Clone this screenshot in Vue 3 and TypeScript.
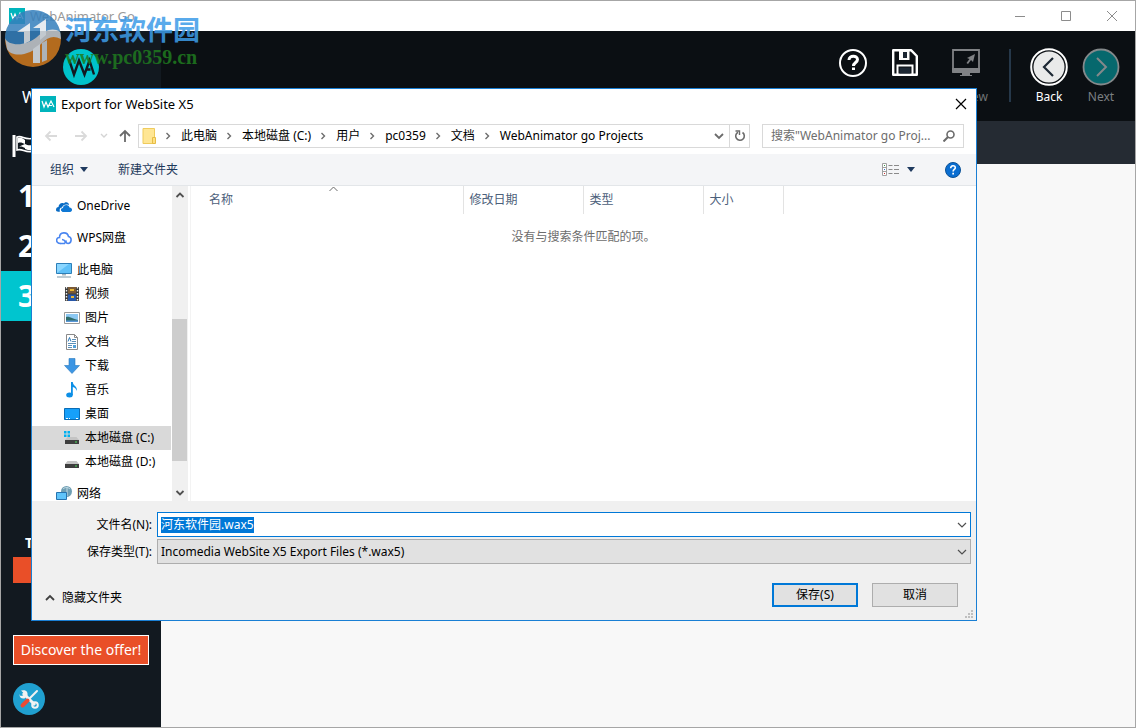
<script setup lang="ts">
import { onMounted, ref } from 'vue'

interface TreeItem {
  id: string
  label: string
  level: number
  gap?: boolean
  selected?: boolean
}

const tree: TreeItem[] = [
  { id: 'onedrive', label: 'OneDrive', level: 0 },
  { id: 'wps', label: 'WPS网盘', level: 0, gap: true },
  { id: 'pc', label: '此电脑', level: 0, gap: true },
  { id: 'video', label: '视频', level: 1 },
  { id: 'picture', label: '图片', level: 1 },
  { id: 'document', label: '文档', level: 1 },
  { id: 'download', label: '下载', level: 1 },
  { id: 'music', label: '音乐', level: 1 },
  { id: 'desktop', label: '桌面', level: 1 },
  { id: 'diskc', label: '本地磁盘 (C:)', level: 1, selected: true },
  { id: 'diskd', label: '本地磁盘 (D:)', level: 1 },
  { id: 'network', label: '网络', level: 0, gap: true },
]

const crumbs: string[] = ['此电脑', '本地磁盘 (C:)', '用户', 'pc0359', '文档', 'WebAnimator go Projects']
const steps: string[] = ['1', '2', '3']

const fileName = ref<string>('河东软件园.wax5')
const fileInput = ref<HTMLInputElement | null>(null)

onMounted(() => {
  fileInput.value?.focus()
  fileInput.value?.select()
})
</script>

<template>
  <div class="window">
    <header class="titlebar">
      <svg class="app-icon" viewBox="0 0 16 16" aria-hidden="true">
        <rect width="16" height="16" fill="#00b4bc" />
        <path d="M2 5l2 6 2-5 2 5 3-6 3 6M9 9.500h3" fill="none" stroke="#fff" stroke-width="1.200" />
      </svg>
      <span class="window-name">WebAnimator Go</span>
      <div class="window-controls">
        <button type="button" aria-label="Minimize">
          <svg viewBox="0 0 12 12"><path d="M1 6.500h10" /></svg>
        </button>
        <button type="button" aria-label="Maximize">
          <svg viewBox="0 0 12 12"><path d="M1.500 1.500h9v9h-9z" /></svg>
        </button>
        <button type="button" aria-label="Close window">
          <svg viewBox="0 0 12 12"><path d="M1 1l10 10M11 1L1 11" /></svg>
        </button>
      </div>
    </header>

    <div class="workspace">
      <aside class="sidebar">
        <svg class="brand" viewBox="0 0 36 36" aria-hidden="true">
          <circle cx="18" cy="18" r="18" fill="#00c3cb" />
          <path d="M6 10.500l5 15 5-14 5.500 14 5-14 4.500 14M22.500 20.500h5" fill="none" stroke="#121920" stroke-width="2.400" />
        </svg>
        <p class="brand-name">W</p>
        <nav class="steps">
          <button type="button" class="step" aria-label="Start">
            <svg class="flag" viewBox="0 0 24 24">
              <path d="M2 1v22" stroke="#fff" stroke-width="3" />
              <path d="M5 3c6-2 7 4 18 1v13c-10 3-12-3-18-1z" fill="none" stroke="#fff" stroke-width="1.600" />
              <path d="M6 4c4-1 5 1 7 2v4c-3-1-4-2-7-1zM13 10c3 2 6 1 9 1v5c-4 1-6 0-9-1zM6 13c3-1 5 0 7 1v-4" fill="#fff" />
            </svg>
          </button>
          <button v-for="s in steps" :key="s" type="button" class="step" :class="{ active: s === '3' }">{{ s }}</button>
        </nav>
        <div class="offer">
          <p class="trial">T</p>
          <div class="trial-bar"></div>
          <a class="discover" href="#">Discover the offer!</a>
          <button type="button" class="tools" aria-label="Tools">
            <svg viewBox="0 0 32 32">
              <circle cx="16" cy="16" r="16" fill="#20a0d0" />
              <path d="M10 10l12 12" stroke="#f2f2f2" stroke-width="3" />
              <path d="M8 7.500l3 3-1 2-2.500.5-1-2c0 4 2 5 5 4.500l3-3c.5-3-1-6-5.500-5z" fill="#f2f2f2" />
              <circle cx="22" cy="22" r="2.800" fill="none" stroke="#f2f2f2" stroke-width="2" />
              <path d="M24 8l-8 8" stroke="#f2f2f2" stroke-width="2" stroke-linecap="round" />
              <path d="M14.500 17.500l-5 5" stroke="#e94b35" stroke-width="4" stroke-linecap="round" />
            </svg>
          </button>
        </div>
      </aside>

      <main class="main">
        <div class="header">
          <button type="button" class="tool" aria-label="Help">
            <span class="tool-icon">
              <svg width="30" height="30" viewBox="0 0 30 30">
                <circle cx="15" cy="15" r="13" fill="none" stroke="#fff" stroke-width="2" />
                <path d="M11 12c0-5 8.500-5 8.500-.5 0 3-4 3-4 6.500" fill="none" stroke="#fff" stroke-width="3" />
                <path d="M14 19.500h3v2.500h-3z" fill="#fff" />
              </svg>
            </span>
          </button>
          <button type="button" class="tool" aria-label="Save">
            <span class="tool-icon">
              <svg width="28" height="30" viewBox="0 0 28 30">
                <path d="M2.200 2.200h17.800l5.800 5.800v18.800h-23.600z" fill="none" stroke="#fff" stroke-width="2.400" stroke-linejoin="round" />
                <path d="M8 2h10.500v10H8z" fill="#fff" />
                <path d="M12 4h4v6h-4z" fill="#1c2733" />
                <path d="M6.500 27v-9.500h15v9.500" fill="none" stroke="#fff" stroke-width="2" />
                <path d="M8.500 19.500h11v6h-11z" fill="#1c2733" />
              </svg>
            </span>
          </button>
          <button type="button" class="tool preview">
            <span class="tool-icon">
              <svg width="30" height="30" viewBox="0 0 30 30">
                <path d="M2 2h26v22h-26z" fill="none" stroke="#808285" stroke-width="1.800" />
                <path d="M1 20h28v4h-28zM11 24h8v3h2v1h-12v-1h2z" fill="#808285" />
                <path d="M24 6l-8 4 2.500 1-3 4 1.500 1 3-4 2 2z" fill="#808285" />
              </svg>
            </span>
            <span>Preview</span>
          </button>
          <span class="divider"></span>
          <button type="button" class="tool back">
            <span class="tool-icon">
              <svg width="38" height="38" viewBox="0 0 38 38">
                <circle cx="19" cy="19" r="17.800" fill="#0b0f13" stroke="#fff" stroke-width="2" />
                <circle cx="19" cy="19" r="15.500" fill="#e9eaea" />
                <path d="M23 10l-9 9 9 9" fill="none" stroke="#1d2834" stroke-width="2.200" />
              </svg>
            </span>
            <span>Back</span>
          </button>
          <button type="button" class="tool next">
            <span class="tool-icon">
              <svg width="38" height="38" viewBox="0 0 38 38">
                <circle cx="19" cy="19" r="17.500" fill="#06686d" stroke="#84898b" stroke-width="1.800" />
                <path d="M15 10l9 9-9 9" fill="none" stroke="#84898b" stroke-width="2" />
              </svg>
            </span>
            <span>Next</span>
          </button>
        </div>
        <div class="subbar"></div>
      </main>
    </div>

    <section class="dialog" role="dialog" aria-labelledby="dialog-title">
      <div class="dialog-title">
        <svg class="app-icon" viewBox="0 0 16 16" aria-hidden="true">
          <rect width="16" height="16" fill="#00b4bc" />
          <path d="M2 5l2 6 2-5 2 5 3-6 3 6M9 9.500h3" fill="none" stroke="#fff" stroke-width="1.200" />
        </svg>
        <h1 id="dialog-title">Export for WebSite X5</h1>
        <button type="button" class="dialog-close" aria-label="Close">
          <svg viewBox="0 0 12 12"><path d="M1 1l10 10M11 1L1 11" fill="none" stroke="#000" stroke-width="1.200" /></svg>
        </button>
      </div>

      <div class="navrow">
        <button type="button" class="nav-button" aria-label="Previous location">
          <svg width="14" height="12" viewBox="0 0 14 12"><path d="M13 6H2M6.500 1.500L2 6l4.500 4.500" stroke="#dadada" stroke-width="1.800" fill="none" /></svg>
        </button>
        <button type="button" class="nav-button" aria-label="Next location">
          <svg width="14" height="12" viewBox="0 0 14 12"><path d="M1 6h11M7.500 1.500L12 6l-4.500 4.500" stroke="#dadada" stroke-width="1.800" fill="none" /></svg>
        </button>
        <button type="button" class="nav-button small" aria-label="Recent locations">
          <svg width="8" height="6" viewBox="0 0 8 6"><path d="M1 1l3 3 3-3" stroke="#d4d4d4" stroke-width="1.400" fill="none" /></svg>
        </button>
        <button type="button" class="nav-button up" aria-label="Up">
          <svg width="14" height="14" viewBox="0 0 14 14"><path d="M7 13V2M2 7l5-5 5 5" stroke="#6b6b6b" stroke-width="1.800" fill="none" /></svg>
        </button>
        <div class="address">
          <svg class="folder" viewBox="0 0 14 16" aria-hidden="true">
            <path d="M1 .5h11.500v15H1z" fill="#ffe694" stroke="#efcb5c" />
            <path d="M10.500 9.500h3v6h-3z" fill="#ffe082" stroke="#e6bd45" />
          </svg>
          <ol class="crumbs">
            <li v-for="c in crumbs" :key="c">
              <svg width="6" height="8" viewBox="0 0 6 8" aria-hidden="true"><path d="M1.500 1l3 3-3 3" stroke="#6d6d6d" stroke-width="1.400" fill="none" /></svg>
              <a href="#">{{ c }}</a>
            </li>
          </ol>
          <button type="button" class="history" aria-label="History">
            <svg width="10" height="8" viewBox="0 0 10 8"><path d="M1 2l4 4 4-4" stroke="#6b6b6b" stroke-width="1.800" fill="none" /></svg>
          </button>
          <button type="button" class="refresh" aria-label="Refresh">
            <svg width="12" height="12" viewBox="0 0 12 12">
              <path d="M4 2.200a4.300 4.300 0 1 0 4.500.3" fill="none" stroke="#6b6b6b" stroke-width="1.600" />
              <path d="M1.500 1h4v4" fill="none" stroke="#6b6b6b" stroke-width="1.400" />
            </svg>
          </button>
        </div>
        <div class="search">
          <input type="text" aria-label="搜索" placeholder="搜索&quot;WebAnimator go Proj..." />
          <svg width="12" height="12" viewBox="0 0 12 12" aria-hidden="true">
            <circle cx="7.500" cy="4.500" r="3.500" fill="none" stroke="#6b6b6b" stroke-width="1.600" />
            <path d="M5 7l-4.500 4.500" stroke="#6b6b6b" stroke-width="2" />
          </svg>
        </div>
      </div>

      <div class="commands">
        <button type="button" class="command organize">
          组织
          <svg width="8" height="5" viewBox="0 0 8 5" aria-hidden="true"><path d="M0 0h8L4 5z" fill="#1f3a5f" /></svg>
        </button>
        <button type="button" class="command">新建文件夹</button>
        <button type="button" class="command view" aria-label="View">
          <svg width="17" height="13" viewBox="0 0 17 13">
            <path d="M.5.500h4v12h-4zM.5 4.500h4M.5 8.500h4" fill="#fff" stroke="#a0a0a0" />
            <path d="M6.500 2.500h4M12 2.500h5M6.500 6.500h4M12 6.500h5M6.500 10.500h4M12 10.500h5" stroke="#8a8a8a" />
            <path d="M2 2h1v1h-1z" fill="#3a9a4a" /><path d="M2 6h1v1h-1z" fill="#2a72d4" /><path d="M2 10h1v1h-1z" fill="#d03030" />
          </svg>
          <svg width="8" height="5" viewBox="0 0 8 5"><path d="M0 0h8L4 5z" fill="#1f3a5f" /></svg>
        </button>
        <button type="button" class="command help" aria-label="Dialog help">
          <svg width="16" height="16" viewBox="0 0 16 16">
            <circle cx="8" cy="8" r="7.500" fill="#0a6ed1" stroke="#0b5196" />
            <path d="M5.700 6.200c0-3.200 4.600-3.200 4.600-.4 0 1.700-2.200 1.700-2.200 3.700" fill="none" stroke="#fff" stroke-width="1.600" />
            <path d="M7.300 10.800h1.700v1.700h-1.700z" fill="#fff" />
          </svg>
        </button>
      </div>

      <div class="browser">
        <ul class="tree">
          <li v-for="t in tree" :key="t.id" :class="{ gap: t.gap, child: t.level === 1, selected: t.selected }">
            <svg class="tree-icon" viewBox="0 0 16 16" aria-hidden="true">
              <template v-if="t.id === 'onedrive'">
                <path d="M0 12c0-2 1-3 2.500-3 0-3 3-5 5.500-3.500 1-2 5-1.500 5 1.500-4-1-6 0-7 2.500-2 0-3 2-2 4-2.500.5-4 0-4-1.500z" fill="#0a6cc4" />
                <path d="M6 13.500c-2-1-1-3.500 1-3.500 0-3.500 5.500-4 6.500-.5 3 0 3.500 4 .5 4.500H6.500z" fill="#0f78d4" />
              </template>
              <template v-else-if="t.id === 'wps'">
                <path d="M4.500 13.500C-1 13.500 0 7 3.500 7.500c0-6 8-6 9-1 4 1 3 7-.5 7-3 0-2-4-6-4" fill="none" stroke="#4a86f0" stroke-width="1.600" />
                <path d="M4 13.500h4.500l2-3" fill="none" stroke="#4a86f0" stroke-width="1.400" />
              </template>
              <template v-else-if="t.id === 'pc'">
                <path d="M.5 1.500h15v10H.5z" fill="#5fc0f8" stroke="#2d7fb8" />
                <path d="M1 11L13 2H1z" fill="#8ad6ff" />
                <path d="M6 12h4v1.500H6z" fill="#a9b6be" />
                <path d="M1 15h14" stroke="#7d98a8" />
              </template>
              <template v-else-if="t.id === 'video'">
                <path d="M1 1h14v14H1z" fill="#3a3a3a" />
                <path d="M4 1h8v6.500H4z" fill="#7a5a36" /><path d="M4 8.500h8V15H4z" fill="#2757a8" />
                <path d="M6 3h4v2H6zM7 10h3v2H7z" fill="#e8b634" />
                <path d="M2.500 1v14M13.500 1v14" stroke="#eee" stroke-width="1.400" stroke-dasharray="1.500 1.500" />
              </template>
              <template v-else-if="t.id === 'picture'">
                <path d="M.5 2.500h15v11H.5z" fill="#fff" stroke="#9a9a9a" />
                <path d="M2 4h12v8H2z" fill="#8cc8f2" />
                <path d="M2 7c4-1 6 2 12 3v1H2z" fill="#2f6d6b" /><path d="M2 10.500h12V12H2z" fill="#5a98d8" />
              </template>
              <template v-else-if="t.id === 'document'">
                <path d="M2.500.5h8l3 3v12h-11z" fill="#fff" stroke="#8a8a8a" />
                <path d="M10.500.5v3h3" fill="none" stroke="#8a8a8a" />
                <path d="M8 5.500h4M8 7.500h4M4 9.500h8M4 11.500h4M4 13.500h4" stroke="#5b8fb8" />
                <path d="M4 7.500l1.500-4 1.500 4" fill="none" stroke="#2b78b8" /><path d="M9 11h3v3H9z" fill="#52a0d8" />
              </template>
              <path v-else-if="t.id === 'download'" d="M5 .5h6v7h4.500L8 15.500.5 7.500H5z" fill="#3d96e4" stroke="#2878be" stroke-width=".6" />
              <template v-else-if="t.id === 'music'">
                <ellipse cx="5.500" cy="13" rx="3.300" ry="2.500" fill="#0c8fe6" />
                <path d="M7 0h1.800c0 4 5.500 4.500 3.700 9-.3-2.500-1.700-3.500-3.700-4v8H7z" fill="#0c8fe6" />
              </template>
              <template v-else-if="t.id === 'desktop'">
                <path d="M.5 2.500h15v11H.5z" fill="#16a0fa" stroke="#0a6cb5" />
                <path d="M2 12.500h2M5 12.500h1M12 12.500h2" stroke="#fff" />
              </template>
              <template v-else-if="t.id === 'diskc' || t.id === 'diskd'">
                <path v-if="t.id === 'diskc'" d="M0 1h2.500v2.500H0zM3.500 1H6v2.500H3.500zM0 4.500h2.500V7H0zM3.500 4.500H6V7H3.500z" fill="#00b0f0" />
                <path d="M3.500 7h9l2.500 3H1z" fill="#c4c4c4" />
                <path d="M1 10h14v4H1z" fill="#3e3e3e" /><path d="M11 11.500h2v1h-2z" fill="#4be05a" />
              </template>
              <template v-else>
                <circle cx="10.500" cy="5.500" r="5.500" fill="#6f9fb4" />
                <path d="M7 3c2-2 5-2 7 0M11 1v9" stroke="#c5dce6" fill="none" />
                <path d="M.5 6.500h10v7H.5z" fill="#5fc4fa" stroke="#2674b0" />
                <path d="M3 15.500h6" stroke="#7d98a8" />
              </template>
            </svg>
            <span>{{ t.label }}</span>
          </li>
        </ul>
        <div class="scrollbar" aria-hidden="true">
          <svg width="10" height="8" viewBox="0 0 10 8"><path d="M1.500 6L5 2.500 8.500 6" stroke="#505050" stroke-width="1.800" fill="none" /></svg>
          <div class="thumb"></div>
          <svg width="10" height="8" viewBox="0 0 10 8"><path d="M1.500 2L5 5.500 8.500 2" stroke="#505050" stroke-width="1.800" fill="none" /></svg>
        </div>
        <div class="files">
          <table>
            <colgroup>
              <col class="col-name" /><col class="col-mid" /><col class="col-mid" /><col class="col-size" /><col />
            </colgroup>
            <thead>
              <tr>
                <th scope="col" class="name">
                  名称
                  <svg class="sort" width="9" height="6" viewBox="0 0 9 6" aria-hidden="true"><path d="M.5 5l4-4 4 4" stroke="#6b6b6b" fill="none" /></svg>
                </th>
                <th scope="col">修改日期</th>
                <th scope="col">类型</th>
                <th scope="col">大小</th>
                <td></td>
              </tr>
            </thead>
            <tbody>
              <tr><td colspan="5" class="empty">没有与搜索条件匹配的项。</td></tr>
            </tbody>
          </table>
        </div>
      </div>

      <form class="footer" @submit.prevent>
        <div class="field">
          <label for="file-name">文件名(N):</label>
          <div class="combo">
            <input id="file-name" ref="fileInput" v-model="fileName" type="text" spellcheck="false" />
            <button type="button" aria-label="File names">
              <svg width="10" height="8" viewBox="0 0 10 8"><path d="M1 2l4 4 4-4" stroke="#505050" stroke-width="1.200" fill="none" /></svg>
            </button>
          </div>
        </div>
        <div class="field">
          <label for="file-type">保存类型(T):</label>
          <div class="picker">
            <select id="file-type">
              <option>Incomedia WebSite X5 Export Files (*.wax5)</option>
            </select>
            <svg width="10" height="8" viewBox="0 0 10 8" aria-hidden="true"><path d="M1 2l4 4 4-4" stroke="#505050" stroke-width="1.200" fill="none" /></svg>
          </div>
        </div>
        <div class="actions">
          <button type="button" class="toggle">
            <svg width="10" height="8" viewBox="0 0 10 8" aria-hidden="true"><path d="M1 6l4-4 4 4" stroke="#404040" stroke-width="1.800" fill="none" /></svg>
            隐藏文件夹
          </button>
          <button type="submit" class="push primary">保存(S)</button>
          <button type="button" class="push">取消</button>
        </div>
        <svg class="grip" width="8" height="8" viewBox="0 0 8 8" aria-hidden="true">
          <path d="M6 0h2v2H6zM3 3h2v2H3zM6 3h2v2H6zM0 6h2v2H0zM3 6h2v2H3zM6 6h2v2H6z" fill="#bfbfbf" />
        </svg>
      </form>
    </section>

    <div class="watermark">
      <svg width="58" height="58" viewBox="0 0 58 58" aria-hidden="true">
        <circle cx="28" cy="29" r="28" fill="#d07a1e" />
        <path d="M0 29a28 28 0 0 1 56-2C48 22 43 24 36 31 26 41 8 42 0 29z" fill="#3580bd" />
        <path d="M0 28c3 8 20 9 32-1 8-7 16-10 23-5l1 7c-8-4-13-2-20 5C25 46 7 48 2 39z" fill="#c9cdd2" />
        <path d="M25 13v18l-6 3V22h-7z" fill="#e1e8ee" />
        <path d="M41 9v16l-6 5V18h-7zM28 39l7-5v19h-7z" fill="#e1e8ee" />
        <path d="M37 33l5-3v20l-5 2z" fill="#c9cdd2" />
      </svg>
      <div class="watermark-text">
        <span class="watermark-name">河东软件园</span>
        <span class="watermark-url">www.pc0359.cn</span>
      </div>
    </div>
  </div>
</template>

<style>
html,
body,
#app {
  height: 100%;
}
</style>

<style scoped>
* {
  box-sizing: border-box;
}

.window {
  position: relative;
  display: flex;
  flex-direction: column;
  min-height: 100vh;
  border: 1px solid #a6a6a6;
  background: #f8f8f8;
  color: #000;
  font: 12px/16px "Noto Sans", "Noto Sans CJK SC", sans-serif;
  overflow: hidden;
}

button,
input,
select {
  margin: 0;
  padding: 0;
  border: 0;
  background: none;
  color: inherit;
  font: inherit;
}

p,
h1,
ul,
ol {
  margin: 0;
  padding: 0;
  list-style: none;
}

a {
  color: inherit;
  text-decoration: none;
}

svg {
  flex: none;
}

.titlebar {
  display: flex;
  align-items: center;
  height: 30px;
  padding-left: 8px;
  background: #fff;
}

.app-icon {
  width: 16px;
  height: 16px;
}

.window-name {
  flex: 1;
  padding-left: 5px;
  color: #999;
  font-size: 13px;
}

.window-controls {
  display: flex;
}

.window-controls button {
  display: grid;
  place-items: center;
  width: 46px;
  height: 30px;
}

.window-controls svg {
  width: 12px;
  height: 12px;
  fill: none;
  stroke: #8c8c8c;
}

.workspace {
  display: flex;
  flex: 1;
}

.sidebar {
  display: flex;
  flex-direction: column;
  width: 160px;
  padding-top: 18px;
  background: #121920;
  color: #fff;
}

.brand {
  width: 36px;
  height: 36px;
  margin: 0 auto;
}

.brand-name {
  padding: 3px 0 0 21px;
  font-size: 16px;
  line-height: 18px;
}

.steps {
  display: flex;
  flex-direction: column;
  padding-top: 15px;
}

.step {
  display: flex;
  align-items: center;
  height: 50px;
  padding-left: 17px;
  font: bold 30px/48px "Open Sans", "Noto Sans", sans-serif;
}

.step.active {
  background: #00c5cf;
}

.step:first-child {
  padding-left: 11px;
}

.flag {
  width: 24px;
  height: 24px;
}

.offer {
  display: flex;
  flex-direction: column;
  align-items: flex-start;
  margin-top: auto;
  padding: 0 12px 12px;
}

.trial {
  padding-left: 12px;
  font-size: 14px;
  font-weight: bold;
  line-height: 24px;
}

.trial-bar {
  align-self: stretch;
  height: 26px;
  margin: 2px 0 52px;
  background: #e94f28;
}

.discover {
  align-self: stretch;
  height: 30px;
  border: 1px solid #fff;
  background: #e94f28;
  font-size: 14px;
  line-height: 28px;
  text-align: center;
  white-space: nowrap;
}

.tools {
  width: 32px;
  height: 32px;
  margin-top: 18px;
}

.main {
  display: flex;
  flex: 1;
  flex-direction: column;
}

.header {
  display: flex;
  justify-content: flex-end;
  height: 90px;
  padding: 17px 8px 0 0;
  background: #0b0f13;
}

.tool {
  display: flex;
  flex-direction: column;
  align-items: center;
  width: 52px;
  color: #fff;
  line-height: 22px;
}

.tool-icon {
  display: block;
  height: 38px;
}

.tool.preview {
  width: 70px;
  color: #6f7476;
}

.tool.next {
  color: #7b7f82;
}

.divider {
  width: 2px;
  height: 53px;
  margin: 1px 12px 0 8px;
  background: #26384a;
}

.subbar {
  height: 43px;
  background: #252b33;
}

.dialog {
  position: absolute;
  top: 87px;
  right: 158px;
  left: 30px;
  display: flex;
  flex-direction: column;
  border: 1px solid #1a7fd4;
  background: #fff;
}

.dialog-title {
  display: flex;
  align-items: center;
  height: 30px;
  padding: 0 9px 0 8px;
}

.dialog-title h1 {
  flex: 1;
  padding-left: 5px;
  font-size: 13px;
  font-weight: normal;
}

.dialog-close svg {
  display: block;
  width: 12px;
  height: 12px;
}

.navrow {
  display: flex;
  align-items: center;
  height: 35px;
  padding: 0 12px 2px;
}

.nav-button {
  display: grid;
  place-items: center;
  width: 30px;
  height: 24px;
}

.nav-button:first-child {
  width: 14px;
  margin-right: 8px;
}

.nav-button.small {
  width: 16px;
}

.nav-button.up {
  width: 26px;
}

.address {
  display: flex;
  flex: 1;
  align-items: stretch;
  height: 24px;
  border: 1px solid #d9d9d9;
}

.folder {
  align-self: center;
  width: 14px;
  height: 16px;
  margin-left: 3px;
}

.crumbs {
  display: flex;
  flex: 1;
  align-items: center;
}

.crumbs li {
  display: flex;
  align-items: center;
  gap: 10px;
  padding-left: 9px;
  white-space: nowrap;
}

.history,
.refresh {
  display: grid;
  place-items: center;
  width: 20px;
}

.refresh {
  border-left: 1px solid #d9d9d9;
}

.search {
  display: flex;
  align-items: center;
  width: 202px;
  height: 24px;
  margin-left: 12px;
  padding: 0 8px;
  border: 1px solid #d9d9d9;
}

.search input {
  flex: 1;
  min-width: 0;
  outline: none;
}

.search input::placeholder {
  color: #6d6d6d;
  opacity: 1;
}

.commands {
  display: flex;
  align-items: center;
  height: 32px;
  padding: 0 15px 0 18px;
  border-bottom: 1px solid #e3e6e9;
  background: #f4f5f7;
  color: #1e395b;
}

.command {
  display: flex;
  align-items: center;
  gap: 6px;
}

.organize {
  margin-right: 30px;
}

.view {
  gap: 8px;
  margin-right: 30px;
  margin-left: auto;
}

.browser {
  display: flex;
  height: 315px;
}

.tree {
  width: 140px;
  padding: 8px 1px 0 0;
  overflow: hidden;
}

.tree li {
  display: flex;
  align-items: center;
  gap: 5px;
  height: 24px;
  padding-left: 24px;
  white-space: nowrap;
}

.tree li.gap {
  margin-top: 8px;
}

.tree li.child {
  padding-left: 32px;
}

.tree li.selected {
  background: #d9d9d9;
}

.tree-icon {
  width: 16px;
  height: 16px;
}

.scrollbar {
  display: flex;
  flex-direction: column;
  align-items: center;
  justify-content: space-between;
  width: 16px;
  padding: 5px 0 4px;
  background: #f0f0f0;
}

.thumb {
  align-self: flex-start;
  width: 15px;
  height: 142px;
  margin-top: auto;
  margin-bottom: 28px;
  background: #cdcdcd;
}

.files {
  flex: 1;
  margin-left: 2px;
  border-left: 1px solid #f3f3f3;
}

table {
  width: 100%;
  border-collapse: collapse;
  table-layout: fixed;
}

.col-name {
  width: 272px;
}

.col-mid {
  width: 120px;
}

.col-size {
  width: 80px;
}

th {
  position: relative;
  height: 28px;
  padding: 0 6px;
  border-right: 1px solid #e3e3e3;
  color: #4c607a;
  font-weight: normal;
  text-align: left;
}

th.name {
  padding-left: 18px;
}

.sort {
  position: absolute;
  top: 0;
  right: 125px;
}

.empty {
  height: 46px;
  padding: 0;
  color: #6d6d6d;
  text-align: center;
}

.footer {
  position: relative;
  height: 119px;
  padding: 11px 5px 0;
  background: #f0f0f0;
}

.field {
  display: flex;
  align-items: center;
  gap: 5px;
  margin-bottom: 2px;
}

.field label {
  width: 115px;
  text-align: right;
}

.combo,
.picker {
  display: flex;
  flex: 1;
  align-items: center;
  height: 25px;
  padding: 0 3px;
  border: 1px solid #0078d7;
  background: #fff;
}

.combo input {
  flex: 1;
  outline: none;
}

.combo input::selection {
  background: #0078d7;
  color: #fff;
}

.combo button {
  display: grid;
  place-items: center;
}

.picker {
  border-color: #adadad;
  background: #e1e1e1;
}

.picker select {
  flex: 1;
  appearance: none;
  outline: none;
}

.actions {
  display: flex;
  align-items: center;
  gap: 14px;
  margin-top: 19px;
  padding-right: 13px;
}

.toggle {
  display: flex;
  align-items: center;
  gap: 7px;
  margin: 6px auto 0 8px;
}

.push {
  width: 86px;
  height: 24px;
  border: 1px solid #adadad;
  background: #e1e1e1;
}

.push.primary {
  border: 2px solid #0078d7;
}

.grip {
  position: absolute;
  right: 3px;
  bottom: 2px;
}

.watermark {
  position: absolute;
  top: 9px;
  left: 4px;
  display: flex;
  gap: 2px;
  opacity: 0.85;
  pointer-events: none;
}

.watermark-text {
  display: flex;
  flex-direction: column;
  padding-top: 3px;
  white-space: nowrap;
}

.watermark-name {
  color: #3d9ce8;
  font: bold 27px/32px "Noto Sans CJK SC", sans-serif;
}

.watermark-url {
  color: #1f7a1f;
  font: bold 20px/24px "Liberation Serif", serif;
}
</style>
